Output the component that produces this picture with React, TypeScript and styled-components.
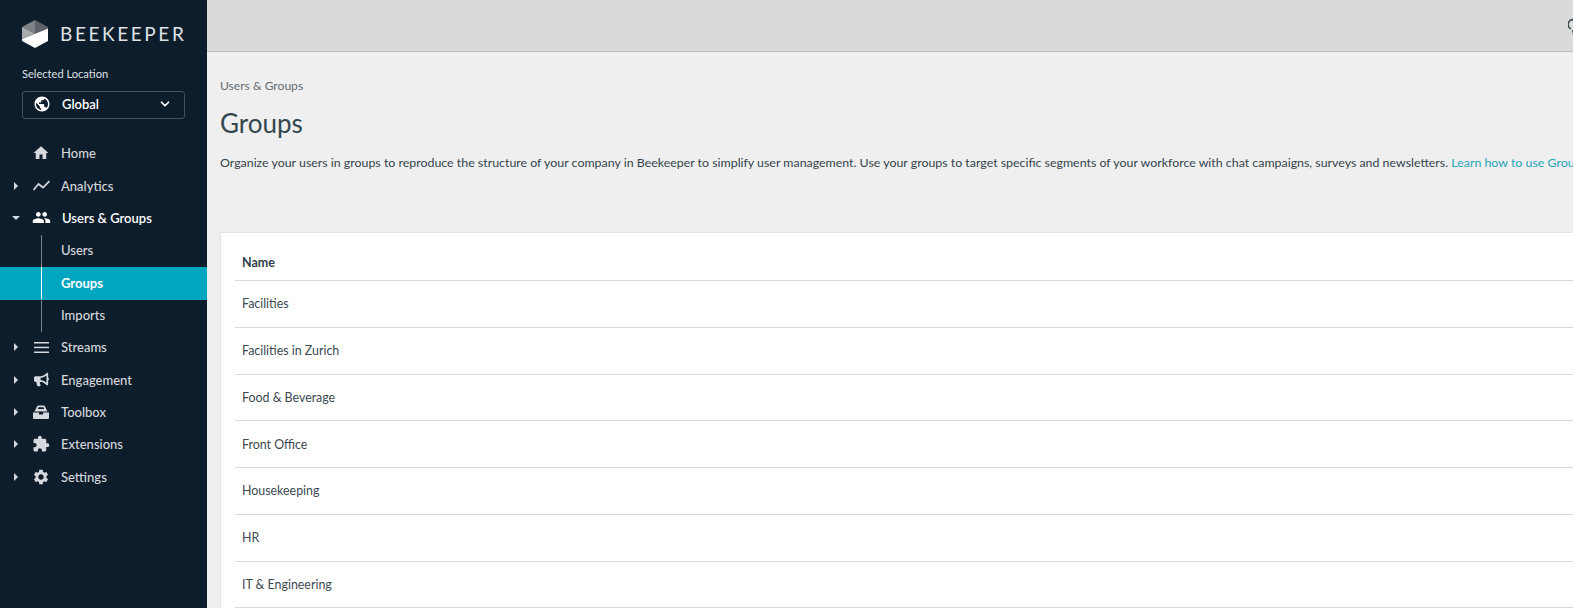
import React from 'react';
import styled, { createGlobalStyle } from 'styled-components';
import { MdHome, MdPublic, MdSettings, MdPeople, MdExtension } from 'react-icons/md';
import { FaBullhorn } from 'react-icons/fa';
import { FiChevronDown } from 'react-icons/fi';

const GlobalStyle = createGlobalStyle`
  html, body {
    margin: 0;
    height: 100%;
    overflow: hidden;
    background: #ffffff;
    font-family: Lato, "Noto Sans", sans-serif;
  }
`;

const Page = styled.div`
  display: flex;
  width: 100%;
  height: 608px;
  overflow: hidden;
`;

const Sidebar = styled.aside`
  flex: 0 0 207px;
  background: #0e1d2c;
  display: flex;
  flex-direction: column;
`;

const LogoRow = styled.div`
  display: flex;
  align-items: center;
  gap: 12px;
  padding: 20px 0 0 22px;
  height: 28px;
`;

const LogoText = styled.span`
  color: #dfe2e5;
  font-size: 19px;
  letter-spacing: 2.6px;
  line-height: 28px;
`;

const LocationLabel = styled.div`
  color: #dfe2e5;
  font-size: 11.1px;
  line-height: 14px;
  margin: 19px 0 0 22px;
`;

const LocationSelect = styled.div`
  display: flex;
  align-items: center;
  box-sizing: border-box;
  width: 163px;
  height: 28px;
  margin: 10px 0 0 22px;
  padding: 0 12px 2px 10px;
  border: 1px solid #43505d;
  border-radius: 3px;
  color: #ffffff;
  font-size: 13px;
  font-weight: 600;
`;

const LocationName = styled.span`
  flex: 1;
  margin-left: 11px;
`;

const Nav = styled.nav`
  margin-top: 19px;
  display: flex;
  flex-direction: column;
`;

const NavRow = styled.div<{ $open?: boolean }>`
  display: flex;
  align-items: center;
  box-sizing: border-box;
  height: 32.35px;
  padding-bottom: 2px;
  color: ${({ $open }) => ($open ? '#ffffff' : '#d5d8dc')};
  font-size: 13px;
  font-weight: ${({ $open }) => ($open ? 600 : 500)};
`;

const Caret = styled.span<{ $open?: boolean; $hidden?: boolean }>`
  flex: 0 0 32px;
  display: flex;
  justify-content: center;
  visibility: ${({ $hidden }) => ($hidden ? 'hidden' : 'visible')};

  &::before {
    content: '';
    border-style: solid;
    border-color: transparent;
    ${({ $open }) =>
      $open
        ? 'border-width: 4px 4px 0 4px; border-top-color: #d5d8dc;'
        : 'border-width: 4px 0 4px 4px; border-left-color: #d5d8dc;'}
  }
`;

const IconSlot = styled.span`
  flex: 0 0 18px;
  display: flex;
  justify-content: center;
  align-items: center;
  margin-right: 11px;
  color: #d5d8dc;
`;

const SubList = styled.div`
  position: relative;
  display: flex;
  flex-direction: column;
`;

const SubLine = styled.span`
  position: absolute;
  left: 41px;
  top: 0;
  bottom: 0;
  width: 1px;
  background: #7c8791;
`;

const SubRow = styled.div<{ $active?: boolean }>`
  display: flex;
  align-items: center;
  box-sizing: border-box;
  height: 32.35px;
  padding: 0 0 2px 61px;
  font-size: 13px;
  font-weight: ${({ $active }) => ($active ? 700 : 500)};
  color: ${({ $active }) => ($active ? '#ffffff' : '#d5d8dc')};
  background: ${({ $active }) => ($active ? '#00a5bf' : 'transparent')};
`;

const ActiveTick = styled.span`
  position: absolute;
  left: 41px;
  top: 32px;
  height: 32px;
  width: 1px;
  background: #ffffff;
`;

const Main = styled.main`
  flex: 1;
  min-width: 0;
  display: flex;
  flex-direction: column;
  background: #efefef;
`;

const TopBar = styled.header`
  flex: 0 0 51px;
  background: #dadada;
  border-bottom: 1px solid #bcbcbc;
  display: flex;
  justify-content: flex-end;
  overflow: hidden;
`;

const BulbClip = styled.span`
  width: 5px;
  overflow: hidden;
  margin-top: 18px;
  height: 16px;
`;

const Content = styled.div`
  padding: 0 0 0 13px;
  flex: 1;
  min-height: 0;
`;

const Crumb = styled.div`
  margin-top: 26px;
  color: #666d72;
  font-size: 12.1px;
  line-height: 16px;
`;

const Title = styled.h1`
  margin: 12px 0 0;
  color: #33474f;
  font-size: 26px;
  font-weight: 400;
  line-height: 34px;
`;

const Description = styled.p`
  margin: 15px 0 0;
  color: #33434c;
  font-size: 12.38px;
  line-height: 16px;
  white-space: nowrap;
`;

const LearnLink = styled.a`
  color: #27a3b8;
`;

const Card = styled.section`
  margin-top: 61px;
  background: #ffffff;
  border: 1px solid #e2e2e2;
  border-right: 0;
  padding: 0 0 0 14px;
  height: 400px;
`;

const HeaderRow = styled.div`
  display: flex;
  align-items: center;
  box-sizing: border-box;
  height: 48px;
  padding: 12px 0 0 7px;
  border-bottom: 1px solid #d8d8d8;
  color: #2e3f48;
  font-size: 12.5px;
  font-weight: 700;
`;

const Row = styled.div`
  display: flex;
  align-items: center;
  box-sizing: border-box;
  height: 46.75px;
  padding-left: 7px;
  border-bottom: 1px solid #d8d8d8;
  color: #3a4952;
  font-size: 12.4px;
`;

const LogoMark = () => (
  <svg width="26" height="28" viewBox="0 0 26 28">
    <path d="M0 7 L13 0 V13.5 Z" fill="#7d8287" />
    <path d="M13 0 L26 7 V8.5 L13 13.5 Z" fill="#5d6369" />
    <path d="M0 7 L13 13.5 L0 19 Z" fill="#a9acaf" />
    <path d="M26 8.5 V21 L13 28 L0 21 V19 Z" fill="#ffffff" />
  </svg>
);

const AnalyticsIcon = () => (
  <svg width="17" height="11" viewBox="0 0 17 11" fill="none" stroke="currentColor" strokeWidth="1.7">
    <path d="M0.5 10 L5.5 4 L10 7.5 L16.5 1" />
  </svg>
);

const StreamsIcon = () => (
  <svg width="15" height="11" viewBox="0 0 15 11" fill="currentColor">
    <rect y="0" width="15" height="1.5" />
    <rect y="4.7" width="15" height="1.5" />
    <rect y="9.5" width="15" height="1.5" />
  </svg>
);

const ToolboxIcon = () => (
  <svg width="16" height="14" viewBox="0 0 16 14" fill="currentColor">
    <path d="M1.5 6.5 L4 1.5 Q4.3 0.5 5.5 0.5 H10.5 Q11.7 0.5 12 1.5 L14.5 6.5 Z M5.5 2.3 L4.8 4 H11.2 L10.5 2.3 Z" fillRule="evenodd" />
    <path d="M0 7.5 H6 V9.5 H10 V7.5 H16 V13 Q16 14 15 14 H1 Q0 14 0 13 Z" />
  </svg>
);

const navTop = [
  { label: 'Home', icon: <MdHome size={18} />, hideCaret: true },
  { label: 'Analytics', icon: <AnalyticsIcon /> },
];

const navBottom = [
  { label: 'Streams', icon: <StreamsIcon /> },
  { label: 'Engagement', icon: <FaBullhorn size={15} /> },
  { label: 'Toolbox', icon: <ToolboxIcon /> },
  { label: 'Extensions', icon: <MdExtension size={18} /> },
  { label: 'Settings', icon: <MdSettings size={18} /> },
];

const groups = ['Facilities', 'Facilities in Zurich', 'Food & Beverage', 'Front Office', 'Housekeeping', 'HR', 'IT & Engineering'];

export default function App() {
  return (
    <Page>
      <GlobalStyle />
      <Sidebar>
        <LogoRow>
          <LogoMark />
          <LogoText>BEEKEEPER</LogoText>
        </LogoRow>
        <LocationLabel>Selected Location</LocationLabel>
        <LocationSelect>
          <MdPublic size={18} />
          <LocationName>Global</LocationName>
          <FiChevronDown size={14} strokeWidth={3} />
        </LocationSelect>
        <Nav>
          {navTop.map((item) => (
            <NavRow key={item.label}>
              <Caret $hidden={item.hideCaret} />
              <IconSlot>{item.icon}</IconSlot>
              {item.label}
            </NavRow>
          ))}
          <NavRow $open>
            <Caret $open />
            <IconSlot>
              <MdPeople size={19} color="#fff" />
            </IconSlot>
            Users &amp; Groups
          </NavRow>
          <SubList>
            <SubLine />
            <SubRow>Users</SubRow>
            <SubRow $active>Groups</SubRow>
            <SubRow>Imports</SubRow>
            <ActiveTick />
          </SubList>
          {navBottom.map((item) => (
            <NavRow key={item.label}>
              <Caret />
              <IconSlot>{item.icon}</IconSlot>
              {item.label}
            </NavRow>
          ))}
        </Nav>
      </Sidebar>
      <Main>
        <TopBar>
          <BulbClip>
            <svg width="16" height="16" viewBox="2 0 16 16" fill="none" stroke="#33434c" strokeWidth="1.4">
              <path d="M5 11 C2.5 9.5 2 7.5 2.2 6 C2.6 3 5 1.5 8 1.5 M6 13 H10 M6.5 15 H9.5" />
            </svg>
          </BulbClip>
        </TopBar>
        <Content>
          <Crumb>Users &amp; Groups</Crumb>
          <Title>Groups</Title>
          <Description>
            Organize your users in groups to reproduce the structure of your company in Beekeeper to simplify user
            management. Use your groups to target specific segments of your workforce with chat campaigns, surveys and
            newsletters. <LearnLink>Learn how to use Groups</LearnLink>
          </Description>
          <Card>
            <HeaderRow>Name</HeaderRow>
            {groups.map((g) => (
              <Row key={g}>{g}</Row>
            ))}
          </Card>
        </Content>
      </Main>
    </Page>
  );
}
